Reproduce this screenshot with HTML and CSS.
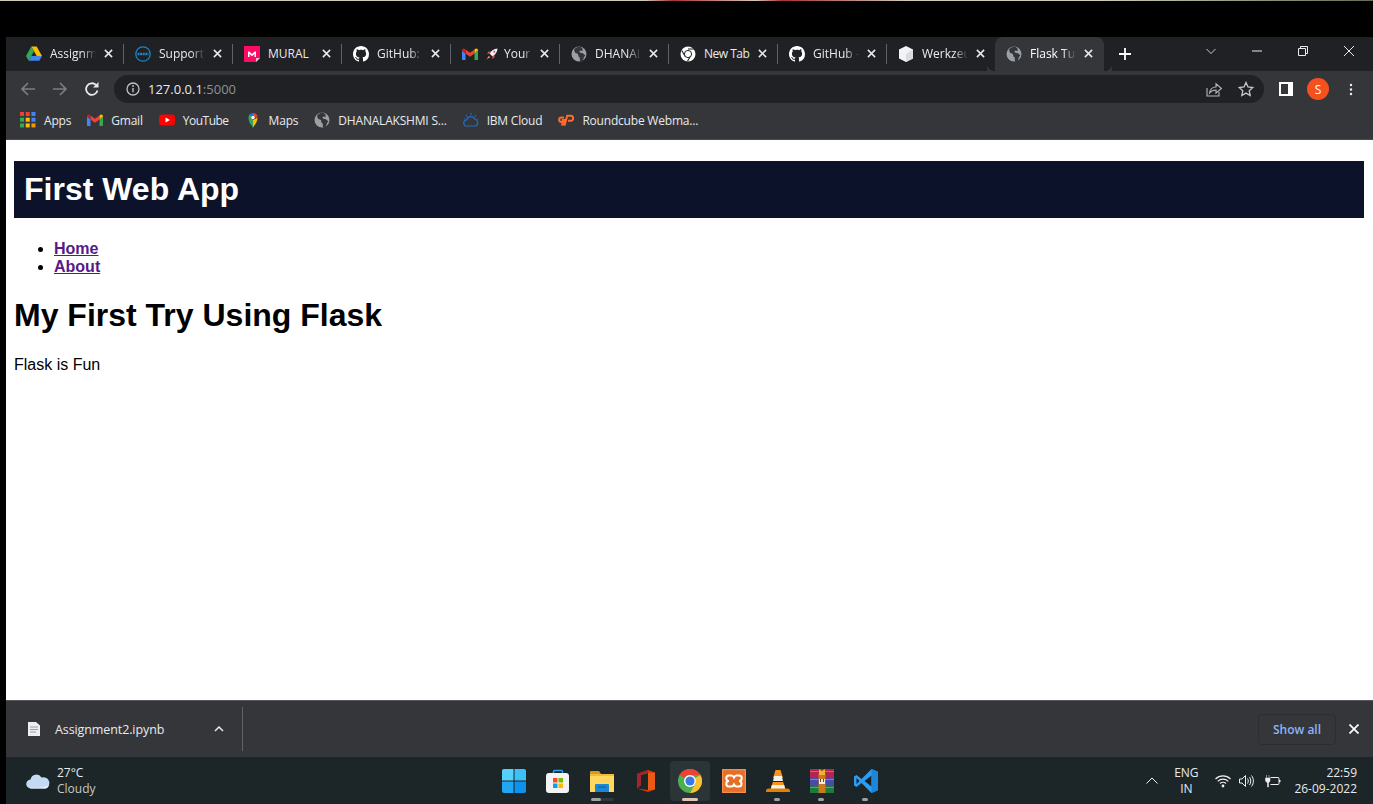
FILE: index.html
```html
<!DOCTYPE html>
<html lang="en">

<head>
    <title>Flask Tutorial</title>
    <meta charset="utf-8">
    <link rel="stylesheet" href="styles.css">
</head>

<body>

    <svg class="sprites" width="0" height="0">
        <symbol id="i-close" viewBox="0 0 10 10"><path d="M1 1l8 8M9 1l-8 8" fill="none" stroke="currentColor" stroke-width="1.7"/></symbol>
        <symbol id="i-globe" viewBox="0 0 16 16"><circle cx="8" cy="8" r="7.5" fill="#9aa0a6"/><path d="M8 .5c-2 .4-4 1.600-5 3.200l1 3 3 1.300.4 2.400 1.300 1 .3 3.900c1.200 0 2.200-.3 3-.8l1-3.500 1.400-1.500-2.400-2.300-2.700-.4-1-1.500 1.500-.7 1.500.6.500-2.200L9.800 1z" fill="#35363a"/></symbol>
        <symbol id="i-github" viewBox="0 0 16 16"><path fill="#fff" d="M8 0C3.580 0 0 3.580 0 8c0 3.540 2.290 6.530 5.470 7.590.4.070.55-.17.55-.38 0-.19-.01-.82-.01-1.490-2.010.37-2.530-.49-2.690-.94-.09-.23-.48-.94-.82-1.130-.28-.15-.68-.52-.01-.53.63-.01 1.080.58 1.230.82.72 1.210 1.870.87 2.330.66.07-.52.28-.87.51-1.070-1.780-.2-3.640-.89-3.640-3.950 0-.87.31-1.590.82-2.150-.08-.2-.36-1.020.08-2.120 0 0 .67-.21 2.200.82.64-.18 1.320-.27 2-.27s1.360.09 2 .27c1.530-1.040 2.200-.82 2.200-.82.44 1.100.16 1.920.08 2.120.51.56.82 1.270.82 2.150 0 3.070-1.870 3.750-3.650 3.950.29.25.54.73.54 1.480 0 1.070-.01 1.930-.01 2.200 0 .21.15.46.55.38A8.013 8.013 0 0 0 16 8c0-4.420-3.580-8-8-8z"/></symbol>
        <symbol id="i-gmail" viewBox="0 0 16 12"><path d="M0 2.500V11c0 .6.400 1 1 1h2.500V5.500z" fill="#4285f4"/><path d="M16 2.500V11c0 .6-.4 1-1 1h-2.500V5.500z" fill="#34a853"/><path d="M3.500 5.500L8 8.800l4.500-3.300V1.500L8 4.800 3.500 1.500z" fill="#ea4335"/><path d="M0 2.500C0 .6 2 -.5 3.500 1.500v4z" fill="#c5221f"/><path d="M16 2.500c0-1.900-2-3-3.500-1v4z" fill="#fbbc04"/></symbol>
    </svg>

    <div class="top-strip"></div>

    <div class="window">

        <div class="tab-strip">
            <div class="tab">
                <svg class="favicon" viewBox="0 0 16 15"><path d="M5.300 0h5.400L16 9.500h-5.300z" fill="#fbbc04"/><path d="M5.300 0L0 9.500l2.700 4.700L8 4.700z" fill="#34a853"/><path d="M2.700 14.200h10.600L16 9.500H5.300z" fill="#4285f4"/></svg>
                <span class="tab-title">Assignment2</span>
                <svg class="tab-close"><use href="#i-close"/></svg>
            </div>
            <div class="tab">
                <svg class="favicon" viewBox="0 0 16 16"><circle cx="8" cy="8" r="7.200" fill="none" stroke="#1c84c6" stroke-width="1.300"/><path d="M2.500 8h11" stroke="#1c84c6" stroke-width="2.400" stroke-dasharray="2 .6"/></svg>
                <span class="tab-title">Support for</span>
                <svg class="tab-close"><use href="#i-close"/></svg>
            </div>
            <div class="tab">
                <svg class="favicon" viewBox="0 0 16 16"><path d="M0 0h16v12l-4 4H0z" fill="#ff0b66"/><path d="M12 16v-4h4z" fill="#ffc2d8"/><path d="M4 11V5.500h1.300L8 8l2.700-2.500H12V11h-1.500V8L8 10.200 5.500 8v3z" fill="#fff"/></svg>
                <span class="tab-title plain">MURAL</span>
                <svg class="tab-close"><use href="#i-close"/></svg>
            </div>
            <div class="tab">
                <svg class="favicon"><use href="#i-github"/></svg>
                <span class="tab-title">GitHub: Where</span>
                <svg class="tab-close"><use href="#i-close"/></svg>
            </div>
            <div class="tab">
                <svg class="favicon gmail"><use href="#i-gmail"/></svg>
                <svg class="rocket" viewBox="0 0 12 12"><path d="M11.500.5C8 .7 5.500 2.500 3.500 5.500L6.500 8.500c3-2 4.800-4.500 5-8z" fill="#f4f0f0"/><path d="M3.500 5.500L1 6l1.500-2.500L5 3.500zM6.500 8.500L6 11l2.500-1.500V7z" fill="#e0455a"/><path d="M2.800 7.800L.6 11.400l3.600-2.200z" fill="#f59b3c"/><circle cx="8.300" cy="3.700" r="1" fill="#e0455a"/></svg>
                <span class="tab-title">Your work</span>
                <svg class="tab-close"><use href="#i-close"/></svg>
            </div>
            <div class="tab">
                <svg class="favicon"><use href="#i-globe"/></svg>
                <span class="tab-title">DHANALAKSHMI</span>
                <svg class="tab-close"><use href="#i-close"/></svg>
            </div>
            <div class="tab">
                <svg class="favicon" viewBox="0 0 16 16"><circle cx="8" cy="8" r="7.500" fill="#fff"/><path d="M8 3h6.500M5.200 10.500L1.800 4.500M10.700 9.800L7.500 15.300" stroke="#202124" stroke-width="1.100"/><circle cx="8" cy="8" r="3.600" fill="#fff" stroke="#202124" stroke-width="1"/></svg>
                <span class="tab-title plain tight">New Tab</span>
                <svg class="tab-close"><use href="#i-close"/></svg>
            </div>
            <div class="tab">
                <svg class="favicon"><use href="#i-github"/></svg>
                <span class="tab-title">GitHub - user</span>
                <svg class="tab-close"><use href="#i-close"/></svg>
            </div>
            <div class="tab">
                <svg class="favicon" viewBox="0 0 16 16"><path d="M8 0l7 3.500v9L8 16l-7-3.500v-9z" fill="#f1f3f4"/><path d="M8 8v8l7-3.500v-9z" fill="#dadce0"/></svg>
                <span class="tab-title">Werkzeug Debugger</span>
                <svg class="tab-close"><use href="#i-close"/></svg>
            </div>
            <div class="tab tab-active">
                <svg class="favicon"><use href="#i-globe"/></svg>
                <span class="tab-title">Flask Tutorial</span>
                <svg class="tab-close"><use href="#i-close"/></svg>
            </div>
            <svg class="new-tab" viewBox="0 0 12 12"><path d="M6 0v12M0 6h12" stroke="#fff" stroke-width="1.800"/></svg>
            <div class="win-controls">
                <svg viewBox="0 0 10 10"><path d="M.5 3l4.500 4.500L9.500 3" fill="none" stroke="#c8cacc"/></svg>
                <svg viewBox="0 0 10 10"><path d="M0 5h10" stroke="#e8eaed"/></svg>
                <svg viewBox="0 0 10 10"><path d="M.5 2.500h7v7h-7zM2.500 2.500V.5h7v7H7.500" fill="none" stroke="#e8eaed"/></svg>
                <svg viewBox="0 0 10 10"><path d="M0 0l10 10M10 0L0 10" stroke="#e8eaed"/></svg>
            </div>
        </div>

        <div class="toolbar">
            <svg class="nav-icon" viewBox="0 0 16 16"><path d="M15 8H2M8 2L2 8l6 6" fill="none" stroke="#7b7d80" stroke-width="1.700"/></svg>
            <svg class="nav-icon" viewBox="0 0 16 16"><path d="M1 8h13M8 2l6 6-6 6" fill="none" stroke="#7b7d80" stroke-width="1.700"/></svg>
            <svg class="nav-icon" viewBox="0 0 16 16"><path d="M13.500 9.500A5.800 5.800 0 1 1 12 4" fill="none" stroke="#e8eaed" stroke-width="1.800"/><path d="M14.500 1v5.500H9z" fill="#e8eaed"/></svg>
            <div class="omnibox">
                <svg class="info" viewBox="0 0 14 14"><circle cx="7" cy="7" r="6" fill="none" stroke="#bdc1c6" stroke-width="1.300"/><path d="M7 6v4.200" stroke="#bdc1c6" stroke-width="1.400"/><circle cx="7" cy="4" r=".9" fill="#bdc1c6"/></svg>
                <span class="url">127.0.0.1<span class="url-port">:5000</span></span>
                <svg class="omni-icon" viewBox="0 0 16 16"><path d="M1 7v8h12v-4" fill="none" stroke="#b4b6b9" stroke-width="1.100"/><path d="M3.500 12c.3-3.500 3-6 6.500-6V2.800L15.500 7.500 10 12V9c-2.800 0-5 1-6.500 3z" fill="none" stroke="#b4b6b9" stroke-width="1.100"/></svg>
                <svg class="omni-icon star" viewBox="0 0 16 16"><path d="M8 1.500l2 4.500 4.800.5-3.600 3.200 1 4.800L8 12.100l-4.200 2.400 1-4.800L1.200 6.500 6 6z" fill="none" stroke="#c4c6c8" stroke-width="1.300"/></svg>
            </div>
            <svg class="side-panel" viewBox="0 0 14 14"><path d="M0 0h14v14H0z" fill="#fff"/><path d="M2 2h7v10H2z" fill="#35363a"/></svg>
            <div class="avatar">S</div>
            <svg class="kebab" viewBox="0 0 4 16"><circle cx="2" cy="2.500" r="1.500" fill="#e8eaed"/><circle cx="2" cy="8" r="1.500" fill="#e8eaed"/><circle cx="2" cy="13.500" r="1.500" fill="#e8eaed"/></svg>
        </div>

        <div class="bookmarks">
            <div class="bookmark">
                <svg class="favicon" viewBox="0 0 14 14"><path d="M0 0h3.500v3.500H0z" fill="#ea4335"/><path d="M5 0h3.500v3.500H5z" fill="#ea4335"/><path d="M10 0h3.500v3.500H10z" fill="#4285f4"/><path d="M0 5h3.500v3.500H0z" fill="#34a853"/><path d="M5 5h3.500v3.500H5z" fill="#fbbc04"/><path d="M10 5h3.500v3.500H10z" fill="#4285f4"/><path d="M0 10h3.500v3.500H0z" fill="#34a853"/><path d="M5 10h3.500v3.500H5z" fill="#fbbc04"/><path d="M10 10h3.500v3.500H10z" fill="#f29900"/></svg>
                <span>Apps</span>
            </div>
            <div class="bookmark">
                <svg class="favicon gmail"><use href="#i-gmail"/></svg>
                <span>Gmail</span>
            </div>
            <div class="bookmark">
                <svg class="favicon" viewBox="0 0 16 16"><rect y="2.500" width="16" height="11" rx="3" fill="#f00"/><path d="M6.500 5.500v5L11 8z" fill="#fff"/></svg>
                <span class="tight">YouTube</span>
            </div>
            <div class="bookmark">
                <svg class="favicon" viewBox="0 0 16 16"><path d="M8 16c-1-3-4.500-5-4.500-10.500a4.500 4.500 0 0 1 1.300-3.200L8 5.500z" fill="#34a853"/><path d="M8 16c1-3 4.500-5 4.500-10.500L8 8z" fill="#fbbc04"/><path d="M4.800 2.300A4.500 4.500 0 0 1 8 1l-.2 4.500z" fill="#1a73e8"/><path d="M8 1a4.500 4.500 0 0 1 4.500 4.500H8z" fill="#ea4335"/><circle cx="8" cy="5.500" r="1.700" fill="#fff"/></svg>
                <span>Maps</span>
            </div>
            <div class="bookmark">
                <svg class="favicon"><use href="#i-globe"/></svg>
                <span>DHANALAKSHMI S...</span>
            </div>
            <div class="bookmark">
                <svg class="favicon" viewBox="0 0 16 16"><path d="M4 14a3 3 0 0 1-.5-6A4.500 4.500 0 0 1 12 7.500 3.300 3.300 0 0 1 12 14z" fill="none" stroke="#1f70c1" stroke-width="1.200"/><path d="M8 1v2M3 3l1 1.500M13 3l-1 1.500M1 7h1M14 7h1" stroke="#1f70c1" stroke-width="1.200"/></svg>
                <span>IBM Cloud</span>
            </div>
            <div class="bookmark">
                <svg class="favicon" viewBox="0 0 16 12"><path d="M6 3.500H3.500a2.300 2.300 0 0 0 0 4.600H5L4.200 10.500h2L7.500 6H3.800" fill="none" stroke="#ff6c2c" stroke-width="2"/><path d="M6.500 11.500L9.200 1.800h3.500a2.500 2.500 0 0 1 0 5H10" fill="none" stroke="#ff6c2c" stroke-width="2"/></svg>
                <span>Roundcube Webma...</span>
            </div>
        </div>

        <main class="page">
            <div class="site-header">
                <h1>First Web App</h1>
            </div>
            <ul class="site-nav">
                <li><a href="#">Home</a></li>
                <li><a href="#">About</a></li>
            </ul>
            <h1 class="page-title">My First Try Using Flask</h1>
            <p class="page-text">Flask is Fun</p>
        </main>

        <div class="download-shelf">
            <svg class="file-icon" viewBox="0 0 12 14"><path d="M0 0h8l4 3.500V14H0z" fill="#eceef0"/><path d="M2 5h8M2 7.500h8M2 10h6" stroke="#9a9ca0"/></svg>
            <span class="file-name">Assignment2.ipynb</span>
            <svg class="file-chevron" viewBox="0 0 10 6"><path d="M1 5l4-4 4 4" fill="none" stroke="#e8eaed" stroke-width="1.500"/></svg>
            <div class="shelf-divider"></div>
            <div class="show-all">Show all</div>
            <svg class="shelf-close" viewBox="0 0 10 10"><path d="M.5.5l9 9M9.500.5l-9 9" stroke="#fff" stroke-width="1.700"/></svg>
        </div>

        <div class="taskbar">
            <div class="weather">
                <svg class="weather-icon" viewBox="0 0 24 16"><path d="M5 15.500a4.500 4.500 0 0 1-.5-9A6 6 0 0 1 15.500 4.500 5.500 5.500 0 0 1 19.500 15.500z" fill="#c4d9f2"/><path d="M3 14c5 1.600 12 1.600 20-2-.5 2-2 3.500-3.500 3.500H5A4 4 0 0 1 3 14z" fill="#e8f0fa"/></svg>
                <div class="weather-text">
                    <div>27°C</div>
                    <div class="weather-note">Cloudy</div>
                </div>
            </div>

            <div class="task-icons">
                <div class="task-btn">
                    <svg viewBox="0 0 24 24"><path d="M0 2a2 2 0 0 1 2-2h9.500v11.500H0z" fill="#55d2fb"/><path d="M12.500 0H22a2 2 0 0 1 2 2v9.500H12.500z" fill="#3cc0f8"/><path d="M0 12.500h11.500V24H2a2 2 0 0 1-2-2z" fill="#20a7f3"/><path d="M12.500 12.500H24V22a2 2 0 0 1-2 2h-9.500z" fill="#0f92ec"/></svg>
                </div>
                <div class="task-btn">
                    <svg viewBox="0 0 24 24"><path d="M7.500 6V2.500a1 1 0 0 1 1-1h7a1 1 0 0 1 1 1V6" fill="none" stroke="#2aa4e8" stroke-width="1.500"/><rect y="4" width="23" height="20" rx="3" fill="#f3f3f3"/><path d="M7 9h4.500v4.500H7z" fill="#f25022"/><path d="M12.500 9H17v4.500h-4.500z" fill="#7fba00"/><path d="M7 14.500h4.500V19H7z" fill="#00a4ef"/><path d="M12.500 14.500H17V19h-4.500z" fill="#ffb900"/></svg>
                </div>
                <div class="task-btn has-open">
                    <svg viewBox="0 0 24 24"><path d="M0 3a1 1 0 0 1 1-1h8l2 3h-11z" fill="#d99a17"/><path d="M0 5h24v18H0z" fill="#ffd75e"/><path d="M0 5h24v2H0z" fill="#f2bc3a"/><path d="M5 16a1 1 0 0 1 1-1h12a1 1 0 0 1 1 1v7H5z" fill="#1b86d6"/><path d="M8 18h8" stroke="#0d5c9e"/></svg>
                </div>
                <div class="task-btn">
                    <svg viewBox="0 0 24 24"><path d="M14 1l7 2.500v17L14 23 3 19.500 14 21V4L7 6v10l-4 3.500V5z" fill="#d83b01"/><path d="M14 1L3 5v14.500L7 16V6l7-2z" fill="#a4262c"/><path d="M14 4v17l7-.5v-17z" fill="#eb5a15"/></svg>
                </div>
                <div class="task-btn task-active">
                    <svg viewBox="0 0 24 24"><circle cx="12" cy="12" r="12" fill="#4caf50"/><path d="M12 0a12 12 0 0 1 10.400 6H12a6 6 0 0 0-5.200 3L1.600 6A12 12 0 0 1 12 0z" fill="#ea4335"/><path d="M22.400 6a12 12 0 0 1-10.400 18l5.200-9a6 6 0 0 0 0-6z" fill="#fbc02d"/><circle cx="12" cy="12" r="6" fill="#fff"/><circle cx="12" cy="12" r="4.600" fill="#3b78e7"/></svg>
                </div>
                <div class="task-btn">
                    <svg viewBox="0 0 24 24"><rect width="24" height="24" fill="#e86e25"/><rect x=".7" y=".7" width="22.600" height="22.600" fill="none" stroke="#f39a5c"/><path d="M7 6.500h2.500c1.300 0 2 1 2.500 2 .5-1 1.200-2 2.500-2H17a2.500 2.500 0 0 1 0 5.500c1.500 0 2.500 1.200 2.500 2.700S18.500 17.500 17 17.500h-2.500c-1.300 0-2-1-2.500-2-.5 1-1.200 2-2.500 2H7a2.700 2.700 0 0 1 0-5.500 2.700 2.700 0 0 1 0-5.500z" fill="none" stroke="#fff" stroke-width="2"/></svg>
                </div>
                <div class="task-btn has-dot">
                    <svg viewBox="0 0 24 24"><path d="M9.500 1h5L17 9H7z" fill="#f7941d"/><path d="M8.300 7h7.400l1.300 5H7z" fill="#f2f2f2"/><path d="M6.800 13h10.400l1.800 6H5z" fill="#f7941d"/><path d="M5.800 16h12.400l1 4H4.800z" fill="#f2f2f2"/><path d="M0 22c0-1.500 1-2.500 2.500-2.500h19c1.500 0 2.500 1 2.500 2.500v1H0z" fill="#e67e00"/></svg>
                </div>
                <div class="task-btn has-dot">
                    <svg viewBox="0 0 24 24"><path d="M0 0h24v8H0z" fill="#b3244f"/><path d="M0 8h24v8H0z" fill="#4a4aa8"/><path d="M0 16h24v8H0z" fill="#1d7a3d"/><path d="M0 2.500h24M0 10.500h24M0 18.500h24" stroke="#e8e0d0" stroke-width=".6" opacity=".6"/><path d="M8.500 5h7v19h-7z" fill="#c9791e"/><path d="M9 0l3 2 3-2v6H9z" fill="#f0b429"/><path d="M9 10h6v5H9z" fill="#f6efe0"/><path d="M10.500 10v3M13.500 10v3" stroke="#6d4413"/></svg>
                </div>
                <div class="task-btn has-dot">
                    <svg viewBox="0 0 24 24"><path d="M17.500 0L7.500 10 2.500 6 0 7.500v9L2.500 18l5-4 10 10 6.500-2.700V2.700z" fill="#2a9df4"/><path d="M17.500 6.500L10.500 12l7 5.500z" fill="#1b1f22"/><path d="M2.500 9v6l3-3z" fill="#1b1f22"/><path d="M17.500 0L24 2.700v18.600L17.500 24z" fill="#1a86dc"/></svg>
                </div>
            </div>

            <div class="tray">
                <svg class="tray-chevron" viewBox="0 0 12 7"><path d="M.5 6.500L6 1l5.500 5.500" fill="none" stroke="#f0f0f0"/></svg>
                <div class="tray-lang">
                    <div>ENG</div>
                    <div>IN</div>
                </div>
                <svg class="tray-icon" viewBox="0 0 16 14"><path d="M.5 5a10.500 10.500 0 0 1 15 0M2.700 7.300a7.500 7.500 0 0 1 10.600 0M5 9.500a4.200 4.200 0 0 1 6 0" fill="none" stroke="#f0f0f0" stroke-width="1.100"/><circle cx="8" cy="12" r="1.400" fill="#f0f0f0"/></svg>
                <svg class="tray-icon" viewBox="0 0 16 14"><path d="M.5 5H3l3.500-3.500v11L3 9H.5z" fill="none" stroke="#f0f0f0"/><path d="M8.500 4.500c1 1.500 1 3.500 0 5M10.500 3c1.700 2.300 1.700 5.700 0 8M12.500 1.500c2.500 3 2.500 8 0 11" fill="none" stroke="#f0f0f0"/></svg>
                <svg class="tray-icon tray-battery" viewBox="0 0 16 14"><path d="M5.500 3.500H13a1 1 0 0 1 1 1v5a1 1 0 0 1-1 1H5.500" fill="none" stroke="#f0f0f0"/><path d="M14 6h1.500v2H14z" fill="#f0f0f0"/><path d="M1.500 1v3M4 1v3M.5 4h4.500v3L3.500 9v4h-1V9L.5 7z" fill="#f0f0f0" stroke="#f0f0f0" stroke-width=".5"/></svg>
                <div class="tray-clock">
                    <div>22:59</div>
                    <div>26-09-2022</div>
                </div>
            </div>
        </div>

    </div>

</body>

</html>
```

FILE: styles.css
```css
* {
    box-sizing: border-box;
}

body {
    background-color: black;
    color: #e8eaed;
    display: flex;
    flex-direction: column;
    font-family: "Open Sans", sans-serif;
    font-size: 12px;
    height: 804px;
    margin: 0;
    overflow: hidden;
}

svg {
    display: block;
    flex: none;
}

.sprites {
    position: absolute;
}

.top-strip {
    background: linear-gradient(90deg, #cfcbb8 0, #cfcbb8 47%, #a33 49%, #d8c8b8 55%, #a33 57%, #cfcbb8 66%, #cfcbb8 80%, #6b6b55 100%) no-repeat;
    background-size: 100% 1px;
    flex: none;
    height: 37px;
}

.window {
    display: flex;
    flex: 1;
    flex-direction: column;
    margin-left: 6px;
    min-height: 0;
}

/* tabs */

.tab-strip {
    align-items: stretch;
    background-color: #202124;
    display: flex;
    flex: none;
    height: 34px;
    padding-left: 9px;
}

.tab {
    align-items: center;
    display: flex;
    padding: 0 11px 1px 11px;
    position: relative;
    width: 109px;
}

.tab:not(.tab-active)::after {
    background-color: #5f6368;
    content: "";
    height: 20px;
    position: absolute;
    right: 0;
    top: 7px;
    width: 1px;
}

.tab:nth-child(9)::after {
    display: none;
}

.tab-active {
    background-color: #35363a;
    border-radius: 8px 8px 0 0;
    color: white;
    margin-left: -1px;
}

.tab-active::before,
.tab-active::after {
    background: radial-gradient(circle at 0 0, transparent 8px, #35363a 8.5px);
    bottom: 0;
    content: "";
    height: 8px;
    position: absolute;
    right: -8px;
    width: 8px;
}

.tab-active::before {
    background: radial-gradient(circle at 100% 0, transparent 8px, #35363a 8.5px);
    left: -8px;
    right: auto;
}

.favicon {
    height: 16px;
    width: 16px;
}

.favicon.gmail {
    height: 12px;
}

.rocket {
    height: 12px;
    margin-left: 8px;
    width: 12px;
}

.tab-title {
    flex: 1;
    margin-left: 8px;
    -webkit-mask-image: linear-gradient(90deg, black 70%, transparent 100%);
    mask-image: linear-gradient(90deg, black 70%, transparent 100%);
    min-width: 0;
    overflow: hidden;
    white-space: nowrap;
}

.rocket + .tab-title {
    margin-left: 6px;
}

.tab-title.plain {
    -webkit-mask-image: none;
    mask-image: none;
}

.tab-close {
    color: #e8eaed;
    height: 9px;
    margin-left: 8px;
    width: 9px;
}

.new-tab {
    align-self: center;
    height: 12px;
    margin-left: 15px;
    width: 12px;
}

.win-controls {
    display: flex;
    gap: 36px;
    margin-left: auto;
    padding: 9px 19px 0 0;
}

.win-controls svg {
    height: 10px;
    width: 10px;
}

/* toolbar */

.toolbar {
    align-items: center;
    background-color: #35363a;
    display: flex;
    flex: none;
    height: 36px;
    padding: 0 14px 0 14px;
}

.nav-icon {
    height: 16px;
    margin-right: 16px;
    width: 16px;
}

.omnibox {
    align-items: center;
    background-color: #202124;
    border-radius: 14px;
    display: flex;
    height: 28px;
    margin-left: -2px;
    padding: 0 10px 0 12px;
    width: 1150px;
}

.info {
    height: 14px;
    width: 14px;
}

.url {
    color: #e8eaed;
    flex: 1;
    font-size: 13px;
    margin-left: 8px;
}

.url-port {
    color: #8f9195;
}

.omni-icon {
    height: 16px;
    width: 16px;
}

.star {
    margin-left: 16px;
}

.side-panel {
    height: 14px;
    margin-left: 15px;
    width: 14px;
}

.avatar {
    align-items: center;
    background-color: #f4511e;
    border-radius: 50%;
    color: white;
    display: flex;
    flex: none;
    font-size: 12px;
    height: 22px;
    justify-content: center;
    margin-left: 14px;
    width: 22px;
}

.kebab {
    height: 13px;
    margin-left: 20px;
    width: 4px;
}

/* bookmarks */

.bookmarks {
    align-items: flex-start;
    background-color: #35363a;
    border-bottom: 1px solid #4a4b4f;
    display: flex;
    flex: none;
    gap: 16px;
    height: 33px;
    letter-spacing: -0.2px;
    padding: 5px 0 0 14px;
}

.bookmark {
    align-items: center;
    display: flex;
    gap: 8px;
    height: 16px;
    white-space: nowrap;
}

.tight {
    letter-spacing: -0.5px;
}

/* the page itself */

.page {
    background-color: white;
    color: black;
    flex: 1;
    font-family: "Liberation Sans", Arial, sans-serif;
    font-size: 16px;
    min-height: 0;
    padding: 21px 9px 0 8px;
}

.site-header {
    background-color: #0b122a;
    color: white;
    padding: 10px;
}

.site-header h1 {
    font-size: 32px;
    line-height: 37px;
    margin: 0;
}

.site-nav {
    font-weight: bold;
    margin: 22px 0 0 0;
    padding-left: 40px;
}

.site-nav a {
    color: #551a8b;
}

.page-title {
    font-size: 32px;
    line-height: 37px;
    margin: 21px 0 0 0;
}

.page-text {
    line-height: 18px;
    margin: 22px 0 0 0;
}

/* download shelf */

.download-shelf {
    align-items: center;
    background-color: #35363a;
    border-top: 1px solid #55565a;
    display: flex;
    flex: none;
    height: 57px;
    padding: 0 14px 0 22px;
}

.file-icon {
    height: 14px;
    width: 12px;
}

.file-name {
    font-size: 12.500px;
    letter-spacing: -0.1px;
    margin-left: 15px;
    width: 159px;
}

.file-chevron {
    height: 6px;
    width: 10px;
}

.shelf-divider {
    background-color: #5f6368;
    height: 44px;
    margin-left: 18px;
    width: 1px;
}

.show-all {
    align-items: center;
    border: 1px solid #2c2d30;
    border-radius: 4px;
    color: #8ab4f8;
    display: flex;
    font-weight: 600;
    height: 31px;
    justify-content: center;
    margin-left: auto;
    width: 78px;
}

.shelf-close {
    height: 10px;
    margin-left: 13px;
    width: 10px;
}

/* taskbar */

.taskbar {
    align-items: center;
    background-color: #1c2527;
    display: grid;
    flex: none;
    grid-template-columns: 1fr auto 1fr;
    height: 47px;
}

.weather {
    align-items: center;
    display: flex;
    gap: 7px;
    padding-left: 20px;
}

.weather-icon {
    height: 16px;
    width: 24px;
}

.weather-text {
    font-size: 12px;
    line-height: 16px;
    padding-top: 1px;
}

.weather-note {
    color: #c6c9ca;
}

.task-icons {
    display: flex;
}

.task-btn {
    align-items: center;
    border-radius: 4px;
    display: flex;
    height: 40px;
    justify-content: center;
    position: relative;
    width: 44px;
}

.task-btn svg {
    height: 24px;
    width: 24px;
}

.task-active {
    background-color: #2b3436;
    margin: 0 2px;
    width: 40px;
}

.task-active::after,
.has-open::after,
.has-dot::after {
    background-color: #e0c4b8;
    border-radius: 2px;
    bottom: 0;
    content: "";
    height: 3px;
    left: 12px;
    position: absolute;
    width: 16px;
}

.has-open::before {
    background-color: #30393b;
    border-radius: 2px;
    bottom: 0;
    content: "";
    height: 3px;
    left: 11px;
    position: absolute;
    width: 23px;
}

.has-open::after {
    background-color: #9ea3a4;
    left: 11px;
    width: 10px;
}

.has-dot::after {
    background-color: #9ea3a4;
    left: 18px;
    width: 6px;
}

.tray {
    align-items: center;
    display: flex;
    justify-content: flex-end;
    padding-right: 16px;
}

.tray-chevron {
    height: 7px;
    width: 12px;
}

.tray-lang {
    font-size: 12px;
    line-height: 16px;
    margin-left: 10px;
    text-align: center;
    width: 36px;
}

.tray-icon {
    height: 14px;
    margin-left: 8px;
    width: 16px;
}

.tray-lang + .tray-icon {
    margin-left: 11px;
}

.tray-battery {
    margin-left: 10px;
}

.tray-clock {
    font-size: 12px;
    line-height: 16px;
    margin-left: 13px;
    text-align: right;
}
```
